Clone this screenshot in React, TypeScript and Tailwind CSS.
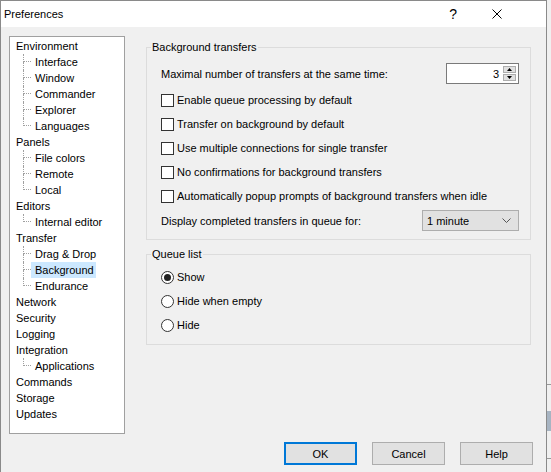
import React from 'react';

type Node = { label: string; children?: string[] };

const tree: Node[] = [
  { label: 'Environment', children: ['Interface', 'Window', 'Commander', 'Explorer', 'Languages'] },
  { label: 'Panels', children: ['File colors', 'Remote', 'Local'] },
  { label: 'Editors', children: ['Internal editor'] },
  { label: 'Transfer', children: ['Drag & Drop', 'Background', 'Endurance'] },
  { label: 'Network' },
  { label: 'Security' },
  { label: 'Logging' },
  { label: 'Integration', children: ['Applications'] },
  { label: 'Commands' },
  { label: 'Storage' },
  { label: 'Updates' },
];

const checks = [
  'Enable queue processing by default',
  'Transfer on background by default',
  'Use multiple connections for single transfer',
  'No confirmations for background transfers',
  'Automatically popup prompts of background transfers when idle',
];

function TreeChild({ label, last, selected }: { label: string; last: boolean; selected: boolean }) {
  return (
    <div className="flex h-[16px] items-stretch pl-[13px]">
      <div className="flex w-[8px] flex-col">
        <div className="h-[8px] border-b border-l border-dotted border-[#a0a0a0]" />
        <div className={last ? 'h-[8px]' : 'h-[8px] border-l border-dotted border-[#a0a0a0]'} />
      </div>
      <div className={selected ? 'flex items-center bg-[#cce8ff] pl-[4px] pr-[2px]' : 'flex items-center pl-[4px] pr-[2px]'}>
        {label}
      </div>
    </div>
  );
}

function Checkbox({ label }: { label: string }) {
  return (
    <div className="flex h-[24px] items-center">
      <div className="h-[13px] w-[13px] border border-[#333333] bg-white" />
      <span className="ml-[3px]">{label}</span>
    </div>
  );
}

function Radio({ label, checked }: { label: string; checked?: boolean }) {
  return (
    <div className="flex h-[24px] items-center">
      <div className="flex h-[13px] w-[13px] items-center justify-center rounded-full border border-[#333333] bg-white">
        {checked ? <div className="h-[7px] w-[7px] rounded-full bg-[#222222]" /> : null}
      </div>
      <span className="ml-[3px]">{label}</span>
    </div>
  );
}

function Button({ label, primary }: { label: string; primary?: boolean }) {
  return (
    <div
      className={
        primary
          ? 'flex h-[23px] w-[73px] items-center justify-center border-2 border-[#0078d7] bg-[#e1e1e1]'
          : 'flex h-[23px] w-[73px] items-center justify-center border border-[#adadad] bg-[#e1e1e1]'
      }
    >
      {label}
    </div>
  );
}

export default function App() {
  return (
    <div
      className="flex h-[472px] w-[551px] overflow-hidden bg-[#f0f0f0] text-[11px] leading-[14px] text-black"
      style={{ fontFamily: '"Liberation Sans", Arial, sans-serif' }}
    >
      {/* Window */}
      <div className="flex h-[472px] w-[547px] shrink-0 flex-col border-l border-r border-t border-[#8a8a8a]">
        {/* Title bar */}
        <div className="flex h-[26px] shrink-0 items-center bg-white pl-[3px]">
          <span className="text-[11px]">Preferences</span>
          <span className="ml-auto text-[14px] leading-[16px]">?</span>
          <svg className="ml-[35px] mr-[44px]" width="10" height="10" viewBox="0 0 10 10">
            <path d="M0.5 0.5 L9.5 9.5 M9.5 0.5 L0.5 9.5" stroke="#000" strokeWidth="1" />
          </svg>
        </div>

        {/* Body */}
        <div className="flex flex-1 flex-col bg-[#f0f0f0] pl-[8px] pt-[9px]">
          <div className="flex items-start">
            {/* Tree */}
            <div className="h-[398px] w-[116px] shrink-0 border border-[#a0a0a0] bg-white pt-[1px]">
              {tree.map((n) => (
                <div key={n.label}>
                  <div className="flex h-[16px] items-center pl-[6px]">{n.label}</div>
                  {n.children?.map((c, i) => (
                    <TreeChild
                      key={c}
                      label={c}
                      last={i === (n.children as string[]).length - 1}
                      selected={c === 'Background'}
                    />
                  ))}
                </div>
              ))}
            </div>

            {/* Right side */}
            <div className="ml-[21px] mt-[4px] flex w-[385px] flex-col">
              <fieldset className="border border-[#dcdcdc] pb-[8px] pl-[14px] pr-[11px]">
                <legend className="-ml-[10px] px-[1px] leading-[14px]">Background transfers</legend>
                <div className="mt-[9px] flex h-[21px] items-center">
                  <span>Maximal number of transfers at the same time:</span>
                  <div className="ml-auto flex h-[21px] w-[73px] items-stretch border border-[#7a7a7a] bg-white">
                    <div className="flex flex-1 items-center justify-end pr-[4px]">3</div>
                    <div className="mr-[2px] flex w-[13px] flex-col gap-[1px] py-[2px]">
                      <div className="flex h-[7px] items-center justify-center border border-[#adadad] bg-[#e1e1e1]">
                        <svg width="5" height="3" viewBox="0 0 5 3">
                          <path d="M2.5 0 L5 3 L0 3 Z" fill="#000" />
                        </svg>
                      </div>
                      <div className="flex h-[7px] items-center justify-center border border-[#adadad] bg-[#e1e1e1]">
                        <svg width="5" height="3" viewBox="0 0 5 3">
                          <path d="M0 0 L5 0 L2.5 3 Z" fill="#000" />
                        </svg>
                      </div>
                    </div>
                  </div>
                </div>
                <div className="mt-[4px] flex flex-col">
                  {checks.map((c) => (
                    <Checkbox key={c} label={c} />
                  ))}
                </div>
                <div className="mt-[2px] flex h-[21px] items-center">
                  <span>Display completed transfers in queue for:</span>
                  <div className="ml-auto flex h-[21px] w-[97px] items-center border border-[#adadad] bg-[#e1e1e1] pl-[4px] pr-[7px]">
                    <span>1 minute</span>
                    <svg className="ml-auto" width="9" height="5" viewBox="0 0 9 5">
                      <path d="M0.5 0.5 L4.5 4.5 L8.5 0.5" fill="none" stroke="#555" strokeWidth="1" />
                    </svg>
                  </div>
                </div>
              </fieldset>

              <fieldset className="mt-[7px] border border-[#dcdcdc] pb-[7px] pl-[14px] pr-[11px]">
                <legend className="-ml-[10px] px-[1px] leading-[14px]">Queue list</legend>
                <div className="mt-[4px] flex flex-col">
                  <Radio label="Show" checked />
                  <Radio label="Hide when empty" />
                  <Radio label="Hide" />
                </div>
              </fieldset>
            </div>
          </div>

          {/* Buttons */}
          <div className="mt-[8px] flex justify-end gap-[15px] pr-[13px]">
            <Button label="OK" primary />
            <Button label="Cancel" />
            <Button label="Help" />
          </div>
        </div>
      </div>

      {/* Desktop strip behind */}
      <div className="flex flex-1 flex-col">
        <div className="h-[384px] bg-[#f0f0f0]" />
        <div className="h-[1px] bg-[#999999]" />
        <div className="h-[26px] bg-[#f0f0f0]" />
        <div className="h-[20px] bg-[#a7b4c2]" />
        <div className="h-[27px] bg-[#f0f0f0]" />
        <div className="h-[1px] bg-[#999999]" />
        <div className="flex-1 bg-[#f0f0f0]" />
      </div>
    </div>
  );
}
